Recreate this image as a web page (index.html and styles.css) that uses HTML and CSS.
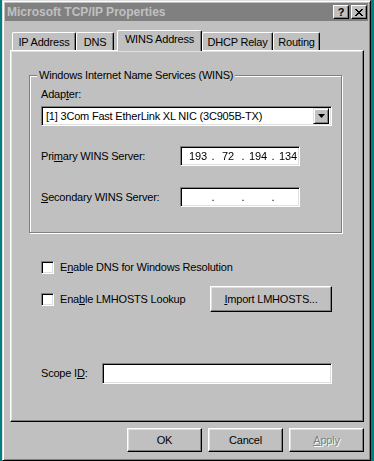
FILE: index.html
```html
<!DOCTYPE html>
<html lang="en">
<head>
  <meta charset="UTF-8" />
  <title>Microsoft TCP/IP Properties</title>
  <link rel="stylesheet" href="styles.css">
</head>
<body>

  <div class="window">

    <!-- Title bar -->
    <div class="titlebar">
      <span class="title">Microsoft TCP/IP Properties</span>
      <div class="title-buttons">
        <span class="tbtn help">?</span>
        <span class="tbtn close">
          <svg width="8" height="7" viewBox="0 0 8 7">
            <path d="M0 0h2v1H0zM6 0h2v1H6zM1 1h2v1H1zM5 1h2v1H5zM2 2h4v1H2zM3 3h2v1H3zM2 4h4v1H2zM1 5h2v1H1zM5 5h2v1H5zM0 6h2v1H0zM6 6h2v1H6z" fill="#000"/>
          </svg>
        </span>
      </div>
    </div>

    <div class="body">
      <!-- Tabs -->
      <div class="tabs">
        <div class="tab tab-ip">IP Address</div>
        <div class="tab tab-dns">DNS</div>
        <div class="tab tab-wins selected">WINS Address</div>
        <div class="tab tab-dhcp">DHCP Relay</div>
        <div class="tab tab-routing">Routing</div>
      </div>

      <div class="panel">
        <div class="group">
          <div class="legend">Windows Internet Name Services (WINS)</div>

          <div class="label adapter-label">Adap<u>t</u>er:</div>
          <div class="combo">
            <span class="combo-text">[1] 3Com Fast EtherLink XL NIC (3C905B-TX)</span>
            <span class="combo-btn">
              <svg width="7" height="4" viewBox="0 0 7 4"><path d="M0 0h7L3.5 4z" fill="#000"/></svg>
            </span>
          </div>

          <div class="field-row primary">
            <span class="label">Pri<u>m</u>ary WINS Server:</span>
            <div class="sunken ip">
              <span class="octet">193</span><span class="dot">.</span>
              <span class="octet">72</span><span class="dot">.</span>
              <span class="octet">194</span><span class="dot">.</span>
              <span class="octet">134</span>
            </div>
          </div>

          <div class="field-row secondary">
            <span class="label"><u>S</u>econdary WINS Server:</span>
            <div class="sunken ip">
              <span class="octet"></span><span class="dot">.</span>
              <span class="octet"></span><span class="dot">.</span>
              <span class="octet"></span><span class="dot">.</span>
              <span class="octet"></span>
            </div>
          </div>
        </div>

        <div class="check-row dns-row">
          <span class="checkbox"></span>
          <span class="label">E<u>n</u>able DNS for Windows Resolution</span>
        </div>

        <div class="check-row lmhosts-row">
          <span class="checkbox"></span>
          <span class="label">Ena<u>b</u>le LMHOSTS Lookup</span>
          <button class="btn import-btn"><u>I</u>mport LMHOSTS...</button>
        </div>

        <div class="scope-row">
          <span class="label">Scope I<u>D</u>:</span>
          <div class="sunken scope-field"></div>
        </div>
      </div>

      <!-- Dialog buttons -->
      <div class="actions">
        <button class="btn">OK</button>
        <button class="btn">Cancel</button>
        <button class="btn disabled"><u>A</u>pply</button>
      </div>
    </div>

  </div>

</body>
</html>
```

FILE: styles.css
```css
body {
  margin: 0;
  background-color: #008080;
  font-family: "Liberation Sans", Arial, sans-serif;
  font-size: 11px;
  line-height: 13px;
  letter-spacing: -0.2px;
  color: #000;
}

u {
  text-decoration: underline;
  text-underline-offset: 1px;
}

.window {
  margin-left: 2px;
  width: 369px;
  height: 461px;
  box-sizing: border-box;
  background: #c0c0c0;
  border: 1px solid;
  border-color: #dfdfdf #000 #000 #dfdfdf;
  box-shadow: inset 1px 1px #fff, inset -1px -1px #808080;
  padding: 2px;
}

/* Title bar */
.titlebar {
  height: 18px;
  background: #808080;
  display: flex;
  align-items: center;
  justify-content: space-between;
  padding-left: 2px;
}

.title {
  color: #c0c0c0;
  font-weight: bold;
  font-size: 12px;
  letter-spacing: 0;
}

.title-buttons {
  display: flex;
  gap: 2px;
  margin-right: 1px;
}

.tbtn {
  width: 16px;
  height: 14px;
  box-sizing: border-box;
  background: #c0c0c0;
  border: 1px solid;
  border-color: #fff #000 #000 #fff;
  box-shadow: inset -1px -1px #808080;
  display: flex;
  align-items: center;
  justify-content: center;
  font-weight: bold;
  font-size: 11px;
  line-height: 11px;
  letter-spacing: 0;
}

/* Tabs */
.body {
  padding: 0 4px 0 5px;
}

.tabs {
  display: flex;
  align-items: flex-end;
  height: 20px;
  margin-top: 9px;
  padding-left: 2px;
}

.tab {
  height: 18px;
  box-sizing: border-box;
  border: 1px solid;
  border-bottom: none;
  border-color: #fff #000 #000 #fff;
  border-top-left-radius: 2px;
  border-top-right-radius: 2px;
  box-shadow: inset -1px 0 #808080;
  display: flex;
  align-items: center;
  justify-content: center;
  padding-top: 1px;
}

.tab-ip { width: 64px; }
.tab-dns { width: 38px; }
.tab-wins { width: 85px; margin-left: 3px; }
.tab-dhcp { width: 71px; }
.tab-routing { width: 47px; }

.tab.selected {
  height: 21px;
  margin-bottom: -1px;
  background: #c0c0c0;
  position: relative;
  z-index: 1;
  padding-top: 0;
  padding-bottom: 3px;
}

/* Property page */
.panel {
  height: 372px;
  box-sizing: border-box;
  border: 1px solid;
  border-color: #fff #000 #000 #fff;
  box-shadow: inset -1px -1px #808080, inset 1px 1px #dfdfdf;
  padding: 24px 0 0 18px;
}

.group {
  width: 313px;
  box-sizing: border-box;
  border: 1px solid #808080;
  box-shadow: inset 1px 1px #fff, 1px 1px #fff;
  padding: 0 0 25px 11px;
}

.legend {
  width: fit-content;
  margin: -7px 0 0 -4px;
  padding: 0 2px;
  background: #c0c0c0;
}

.adapter-label {
  margin-top: 6px;
}

.sunken {
  box-sizing: border-box;
  background: #fff;
  border: 1px solid;
  border-color: #808080 #fff #fff #808080;
  box-shadow: inset 1px 1px #000, inset -1px -1px #dfdfdf;
}

.combo {
  margin-top: 5px;
  width: 291px;
  height: 20px;
  box-sizing: border-box;
  background: #fff;
  border: 1px solid;
  border-color: #808080 #fff #fff #808080;
  box-shadow: inset 1px 1px #000, inset -1px -1px #dfdfdf;
  display: flex;
  align-items: center;
  padding: 2px;
}

.combo-text {
  flex: 1;
  padding-left: 2px;
}

.combo-btn {
  width: 16px;
  height: 16px;
  box-sizing: border-box;
  background: #c0c0c0;
  border: 1px solid;
  border-color: #dfdfdf #000 #000 #dfdfdf;
  box-shadow: inset 1px 1px #fff, inset -1px -1px #808080;
  display: flex;
  align-items: center;
  justify-content: center;
}

.field-row {
  display: grid;
  grid-template-columns: 139px 120px;
  align-items: center;
}

.primary { margin-top: 20px; }
.secondary { margin-top: 21px; }

.ip {
  height: 20px;
  display: flex;
  align-items: center;
  padding-left: 4px;
  overflow: hidden;
  will-change: transform;
}

.octet {
  width: 26px;
  flex: none;
  text-align: center;
}

.dot {
  width: 4px;
  flex: none;
  text-align: center;
  color: #000;
}

/* Checkboxes */
.check-row {
  display: flex;
  align-items: center;
  margin-left: 12px;
  width: 291px;
}

.dns-row {
  margin-top: 28px;
  height: 13px;
}

.lmhosts-row {
  margin-top: 12px;
  height: 26px;
}

.checkbox {
  width: 13px;
  height: 13px;
  box-sizing: border-box;
  background: #fff;
  border: 1px solid;
  border-color: #808080 #fff #fff #808080;
  box-shadow: inset 1px 1px #000, inset -1px -1px #dfdfdf;
  margin-right: 6px;
  flex: none;
}

/* Buttons */
.btn {
  font-family: inherit;
  font-size: 11px;
  letter-spacing: -0.2px;
  color: #000;
  background: #c0c0c0;
  box-sizing: border-box;
  border: 1px solid;
  border-color: #fff #000 #000 #fff;
  box-shadow: inset -1px -1px #808080, inset 1px 1px #dfdfdf;
  padding: 0;
  width: 75px;
  height: 24px;
}

.import-btn {
  margin-left: auto;
  width: 122px;
  height: 26px;
}

.btn.disabled {
  color: #808080;
  text-shadow: 1px 1px 0 #fff;
}

.scope-row {
  display: grid;
  grid-template-columns: 61px 230px;
  align-items: center;
  margin: 51px 0 0 12px;
}

.scope-field {
  height: 21px;
}

.actions {
  display: flex;
  justify-content: flex-end;
  gap: 6px;
  margin-top: 6px;
}
```
